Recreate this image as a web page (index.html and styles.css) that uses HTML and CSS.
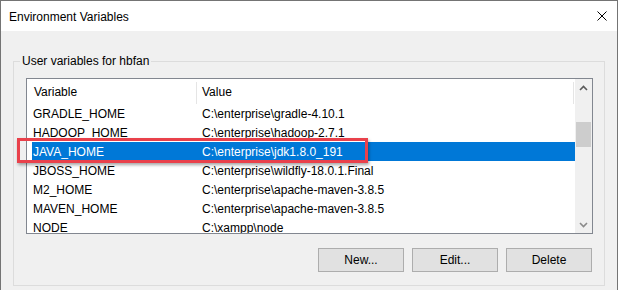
FILE: index.html
```html
<!DOCTYPE html>
<html>
<head>
<meta charset="utf-8">
<link rel="stylesheet" href="styles.css">
</head>
<body>
<div class="window">
  <div class="titlebar">
    <span class="title">Environment Variables</span>
    <svg class="close" width="10" height="10" viewBox="0 0 10 10"><path d="M0.5 0.5 L9.5 9.5 M9.5 0.5 L0.5 9.5" stroke="#000" stroke-width="1" fill="none"/></svg>
  </div>
  <div class="client">
    <div class="group">
      <div class="group-label">User variables for hbfan</div>
      <div class="list">
        <div class="list-main">
          <div class="header">
            <div class="hcell c1">Variable</div>
            <div class="hsep"></div>
            <div class="hcell c2">Value</div>
            <div class="hsep end"></div>
          </div>
          <div class="row"><span class="c1">GRADLE_HOME</span><span class="c2">C:\enterprise\gradle-4.10.1</span></div>
          <div class="row"><span class="c1">HADOOP_HOME</span><span class="c2">C:\enterprise\hadoop-2.7.1</span></div>
          <div class="row sel"><span class="c1">JAVA_HOME</span><span class="c2">C:\enterprise\jdk1.8.0_191</span></div>
          <div class="row"><span class="c1">JBOSS_HOME</span><span class="c2">C:\enterprise\wildfly-18.0.1.Final</span></div>
          <div class="row"><span class="c1">M2_HOME</span><span class="c2">C:\enterprise\apache-maven-3.8.5</span></div>
          <div class="row"><span class="c1">MAVEN_HOME</span><span class="c2">C:\enterprise\apache-maven-3.8.5</span></div>
          <div class="row"><span class="c1">NODE</span><span class="c2">C:\xampp\node</span></div>
        </div>
        <div class="scrollbar">
          <div class="sb-btn"><svg width="9" height="6" viewBox="0 0 9 6"><path d="M1 5 L4.5 1.5 L8 5" stroke="#5a5a5a" stroke-width="1.6" fill="none"/></svg></div>
          <div class="sb-track"><div class="thumb"></div></div>
          <div class="sb-btn"><svg width="9" height="6" viewBox="0 0 9 6"><path d="M1 1 L4.5 4.5 L8 1" stroke="#8a8a8a" stroke-width="1.6" fill="none"/></svg></div>
        </div>
      </div>
      <div class="buttons">
        <button class="btn">New...</button>
        <button class="btn">Edit...</button>
        <button class="btn">Delete</button>
      </div>
    </div>
  </div>
</div>
<div class="annot"></div>
</body>
</html>
```
FILE: styles.css
```css
body {
  margin: 0;
  width: 632px;
  height: 290px;
  overflow: hidden;
  position: relative;
  background: #fff;
  font-family: "Liberation Sans", Arial, sans-serif;
  font-size: 12px;
  color: #000;
}
.window {
  width: 616px;
  height: 289px;
  border: 1px solid #747474;
  border-bottom: none;
  background: #f0f0f0;
  overflow: hidden;
}
.titlebar {
  height: 30px;
  background: #fff;
  display: flex;
  align-items: center;
  justify-content: space-between;
  padding-left: 8px;
}
.title { line-height: 16px; margin-top: 1px; }
.close { margin-right: 10px; }
.client { padding: 30px 12px 0 12px; }
.group {
  border: 1px solid #dcdcdc;
  padding: 0 11px 13px 12px;
}
.group-label {
  width: max-content;
  margin: -9px 0 0 -6px;
  padding: 0 2px;
  line-height: 16px;
  background: #f0f0f0;
}
.list {
  margin-top: 9px;
  height: 156px;
  box-sizing: border-box;
  border: 1px solid #828790;
  background: #fff;
  display: flex;
}
.list-main {
  flex: 1;
  overflow: hidden;
}
.header {
  display: flex;
  height: 25px;
}
.hcell {
  display: flex;
  align-items: center;
  box-sizing: border-box;
}
.hcell.c1 { width: 169px; padding-left: 7px; }
.hcell.c2 { flex: 1; padding-left: 5px; }
.hsep {
  width: 1px;
  margin-top: 3px;
  background: #e5e5e5;
}
.hsep.end { margin-right: 1px; }
.row {
  display: flex;
  align-items: center;
  height: 19px;
  margin-left: 5px;
  white-space: nowrap;
}
.row .c1 { width: 164px; padding-left: 1px; box-sizing: border-box; }
.row .c2 { padding-left: 6px; }
.row.sel { background: #0078d7; color: #fff; }
.scrollbar {
  width: 17px;
  background: #f0f0f0;
  display: flex;
  flex-direction: column;
}
.sb-btn {
  height: 17px;
  display: flex;
  align-items: center;
  justify-content: center;
}
.sb-track { flex: 1; }
.thumb {
  margin: 26px 1px 0 1px;
  height: 25px;
  background: #cdcdcd;
}
.buttons {
  display: flex;
  justify-content: flex-end;
  gap: 8px;
  margin-top: 14px;
  padding-right: 1px;
}
.btn {
  width: 86px;
  height: 24px;
  box-sizing: border-box;
  border: 1px solid #adadad;
  background: #e1e1e1;
  font-family: inherit;
  font-size: 12px;
  color: #000;
  padding: 0;
  display: flex;
  align-items: center;
  justify-content: center;
}
.annot {
  position: absolute;
  left: 17px;
  top: 138px;
  width: 351px;
  height: 25px;
  box-sizing: border-box;
  border: 3px solid #e9414b;
  box-shadow: 1px 2px 3px rgba(0, 0, 0, 0.35);
}
```
